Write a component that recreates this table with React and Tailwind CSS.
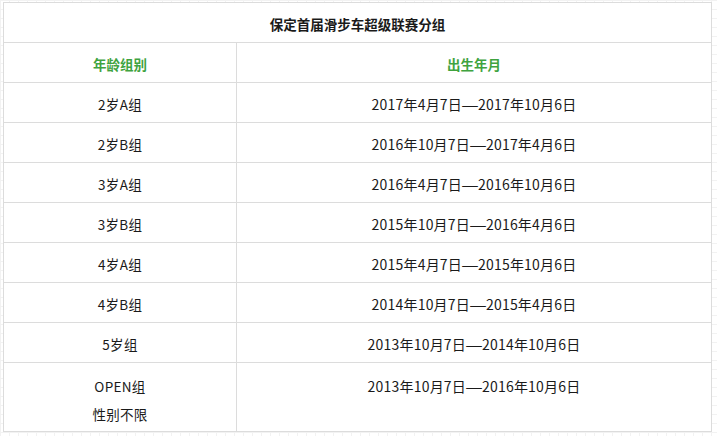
import React from "react";

const rows = [
  ["2岁A组", "2017年4月7日", "2017年10月6日"],
  ["2岁B组", "2016年10月7日", "2017年4月6日"],
  ["3岁A组", "2016年4月7日", "2016年10月6日"],
  ["3岁B组", "2015年10月7日", "2016年4月6日"],
  ["4岁A组", "2015年4月7日", "2015年10月6日"],
  ["4岁B组", "2014年10月7日", "2015年4月6日"],
  ["5岁组", "2013年10月7日", "2014年10月6日"],
];

function Range({ a, b }) {
  return (
    <span className="text-[14px] tracking-[0.2px]">
      {a}
      <span className="inline-block w-[16px] text-center tracking-normal scale-x-[1.4]">—</span>
      {b}
    </span>
  );
}

export default function App() {
  return (
    <div
      className="w-[717px] h-[436px] overflow-hidden bg-white bg-[linear-gradient(#f2f2f2_1px,transparent_1px),linear-gradient(90deg,#f2f2f2_1px,transparent_1px)] bg-[size:9px_9px] pl-[3px] pt-[2px] text-[#1a1a1a] text-[13.5px]"
      style={{ fontFamily: '"Noto Sans CJK SC", "Noto Sans", sans-serif' }}
    >
      <table className="w-[709px] table-fixed border-collapse border border-[#dcdcdc] bg-white">
        <colgroup>
          <col className="w-[233px]" />
          <col />
        </colgroup>
        <tbody>
          <tr className="h-[40px]">
            <td colSpan={2} className="border border-[#dcdcdc] text-center align-middle pt-[3px] font-bold">
              保定首届滑步车超级联赛分组
            </td>
          </tr>
          <tr className="h-[40px]">
            <td className="border border-[#dcdcdc] text-center align-middle pt-[3px] font-bold text-[#3fa33f]">年龄组别</td>
            <td className="border border-[#dcdcdc] text-center align-middle pt-[3px] font-bold text-[#3fa33f]">出生年月</td>
          </tr>
          {rows.map(([a, b, c]) => (
            <tr key={a} className="h-[40px]">
              <td className="border border-[#dcdcdc] text-center align-middle pt-[3px] tracking-[0.3px]">{a}</td>
              <td className="border border-[#dcdcdc] text-center align-middle pt-[3px]">
                <Range a={b} b={c} />
              </td>
            </tr>
          ))}
          <tr className="h-[69px]">
            <td className="border border-[#dcdcdc] text-center align-top pt-[9px] leading-[28px] tracking-[0.3px]">
              <div>OPEN组</div>
              <div>性别不限</div>
            </td>
            <td className="border border-[#dcdcdc] text-center align-top pt-[9px] leading-[28px]">
              <Range a="2013年10月7日" b="2016年10月6日" />
            </td>
          </tr>
        </tbody>
      </table>
    </div>
  );
}
